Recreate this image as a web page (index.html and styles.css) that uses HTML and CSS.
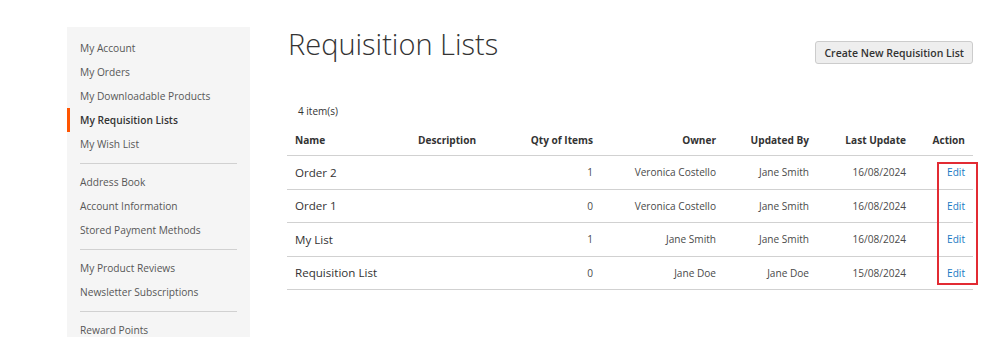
FILE: index.html
```html
<!DOCTYPE html>
<html lang="en">
<head>
    <meta charset="UTF-8">
    <meta name="viewport" content="width=device-width, initial-scale=1.0">
    <title>Requisition Lists</title>
    <link rel="stylesheet" href="styles.css">
</head>
<body>
    <div class="page">
        <div class="sidebar">
            <ul class="nav">
                <li><a href="#">My Account</a></li>
                <li><a href="#">My Orders</a></li>
                <li><a href="#">My Downloadable Products</a></li>
                <li class="current"><strong>My Requisition Lists</strong></li>
                <li><a href="#">My Wish List</a></li>
                <li class="divider"></li>
                <li><a href="#">Address Book</a></li>
                <li><a href="#">Account Information</a></li>
                <li><a href="#">Stored Payment Methods</a></li>
                <li class="divider"></li>
                <li><a href="#">My Product Reviews</a></li>
                <li><a href="#">Newsletter Subscriptions</a></li>
                <li class="divider"></li>
                <li><a href="#">Reward Points</a></li>
            </ul>
        </div>

        <div class="main">
            <div class="title-row">
                <h1>Requisition Lists</h1>
                <button type="button">Create New Requisition List</button>
            </div>

            <div class="toolbar-amount">4 item(s)</div>

            <div class="table-wrap">
                <table class="lists">
                    <thead>
                        <tr>
                            <th class="col-name">Name</th>
                            <th class="col-desc">Description</th>
                            <th class="col-qty num">Qty of Items</th>
                            <th class="col-owner num">Owner</th>
                            <th class="col-updated num">Updated By</th>
                            <th class="col-date num">Last Update</th>
                            <th class="col-action num">Action</th>
                        </tr>
                    </thead>
                    <tbody>
                        <tr>
                            <td class="name">Order 2</td>
                            <td></td>
                            <td class="num">1</td>
                            <td class="num">Veronica Costello</td>
                            <td class="num">Jane Smith</td>
                            <td class="num">16/08/2024</td>
                            <td class="num"><a href="#">Edit</a></td>
                        </tr>
                        <tr>
                            <td class="name">Order 1</td>
                            <td></td>
                            <td class="num">0</td>
                            <td class="num">Veronica Costello</td>
                            <td class="num">Jane Smith</td>
                            <td class="num">16/08/2024</td>
                            <td class="num"><a href="#">Edit</a></td>
                        </tr>
                        <tr>
                            <td class="name">My List</td>
                            <td></td>
                            <td class="num">1</td>
                            <td class="num">Jane Smith</td>
                            <td class="num">Jane Smith</td>
                            <td class="num">16/08/2024</td>
                            <td class="num"><a href="#">Edit</a></td>
                        </tr>
                        <tr>
                            <td class="name">Requisition List</td>
                            <td></td>
                            <td class="num">0</td>
                            <td class="num">Jane Doe</td>
                            <td class="num">Jane Doe</td>
                            <td class="num">15/08/2024</td>
                            <td class="num"><a href="#">Edit</a></td>
                        </tr>
                    </tbody>
                </table>
                <div class="highlight"></div>
            </div>
        </div>
    </div>
</body>
</html>
```

FILE: styles.css
```css
body {
    font-family: "Open Sans", Arial, sans-serif;
    background-color: #fff;
    color: #333;
    margin: 0;
    overflow: hidden;
}
.page {
    display: flex;
    align-items: flex-start;
    padding: 27px 0 0 67px;
}
.sidebar {
    width: 183px;
    flex-shrink: 0;
    background-color: #f5f5f5;
    padding: 9px 0 20px;
}
.nav {
    list-style: none;
    margin: 0;
    padding: 0;
}
.nav li {
    font-size: 10.2px;
    line-height: 24px;
    padding-left: 13px;
}
.nav a {
    color: #575757;
    text-decoration: none;
}
.nav .current {
    border-left: 3px solid #ff5501;
    padding-left: 10px;
}
.nav .current strong {
    font-weight: 600;
    color: #333;
}
.nav .divider {
    height: 0;
    border-top: 1px solid #d1d1d1;
    margin: 7px 13px 6px 13px;
    padding: 0;
}
.main {
    width: 686px;
    margin-left: 37px;
}
.title-row {
    display: flex;
    justify-content: space-between;
    align-items: flex-start;
}
h1 {
    font-size: 29px;
    font-weight: 300;
    line-height: 34px;
    margin: 0;
    padding-left: 1px;
    color: #333;
}
button {
    font-family: "Open Sans", Arial, sans-serif;
    font-size: 10.5px;
    font-weight: 600;
    color: #333;
    background-color: #eee;
    border: 1px solid #ccc;
    border-radius: 3px;
    height: 23px;
    padding: 0 8px;
    margin-top: 14px;
    cursor: pointer;
}
.toolbar-amount {
    font-size: 10px;
    line-height: 14px;
    margin-top: 40px;
    padding-left: 11px;
}
.table-wrap {
    position: relative;
    margin-top: 6px;
}
.lists {
    width: 100%;
    table-layout: fixed;
    border-collapse: separate;
    border-spacing: 0;
}
.lists th {
    font-size: 10.1px;
    font-weight: 700;
    height: 31px;
    padding: 0 8px;
    text-align: left;
    border-bottom: 1px solid #d1d1d1;
    white-space: nowrap;
}
.lists td {
    font-size: 10.1px;
    height: 32.5px;
    padding: 0 8px;
    color: #4a4a4a;
    border-bottom: 1px solid #d1d1d1;
    white-space: nowrap;
}
.lists td.name {
    font-size: 11.6px;
    color: #333;
}
.lists .num {
    text-align: right;
}
.lists a {
    color: #1979c3;
    text-decoration: none;
}
.col-name { width: 107px; }
.col-desc { width: 74px; }
.col-qty { width: 85px; }
.col-owner { width: 107px; }
.col-updated { width: 77px; }
.col-date { width: 81px; }
.col-action { width: 43px; }
.highlight {
    position: absolute;
    left: 650px;
    top: 38px;
    width: 37px;
    height: 119px;
    border: 2px solid #e22b33;
}
```
